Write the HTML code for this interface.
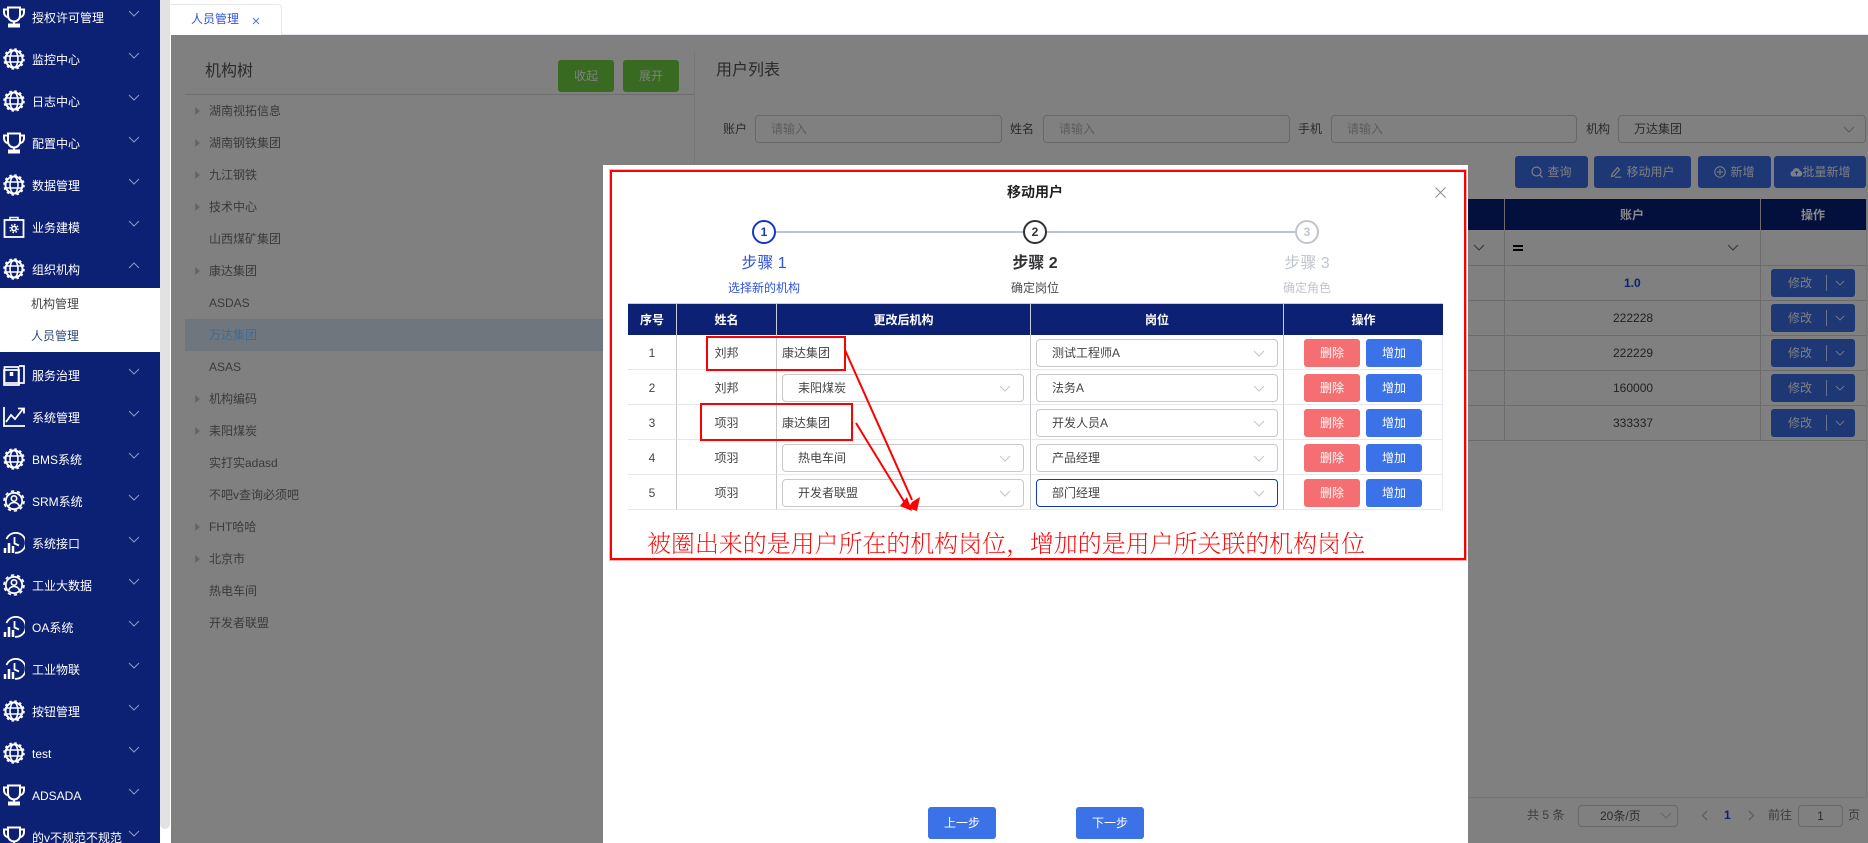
<!DOCTYPE html>
<html lang="zh">
<head>
<meta charset="utf-8">
<title>人员管理</title>
<style>
html,body{margin:0;padding:0;width:1868px;height:843px;overflow:hidden;background:#fff}
body{font-family:"Liberation Sans","Noto Sans CJK SC",sans-serif;font-size:12px;color:#333;position:relative}
.a{position:absolute}
.t{position:absolute;line-height:20px;white-space:nowrap}
.m{color:#fff;left:32px;font-size:12px;margin-top:1px}
.mi{position:absolute;left:3px;width:22px;height:22px;fill:none;stroke:#fff;stroke-width:2}
.ch{position:absolute;left:128px;width:12px;height:7px;fill:none;stroke:#8f9ac4;stroke-width:1;margin-top:-1px}
.tr{left:209px;color:#3a3a3a;font-size:12px;margin-top:1px}
.ar{position:absolute;left:195px;width:0;height:0;border-left:5px solid #666;border-top:4px solid transparent;border-bottom:4px solid transparent;margin-top:1px}
.in{position:absolute;top:115px;height:28px;box-sizing:border-box;border:1px solid #686868;border-radius:4px;line-height:26px;padding-left:15px;color:#5c5c5c}
.lb{top:119px;color:#2b2b2b}
.bb{position:absolute;background:#1e3875;color:#808080;border-radius:3px;text-align:center;box-sizing:border-box}
.bo{position:absolute;left:1771px;width:84px;height:28px;background:#1e3875;border-radius:3px;color:#808080;line-height:28px;padding-left:17px;box-sizing:border-box}
.bo i{position:absolute;left:55px;top:6px;width:1px;height:16px;background:#67738d}
.bo svg{position:absolute;left:64px;top:11px;width:10px;height:6px;fill:none;stroke:#808080;stroke-width:1}
table{border-collapse:separate;border-spacing:0;table-layout:fixed}
th{background:#0c2074;color:#fff;font-weight:700;font-size:12px;height:31px;padding:0;border-right:1px solid #c7ccd8;border-top:1px solid #ccc;box-sizing:border-box}
td{height:35px;padding:1px 0 0;border-bottom:1px solid #e4e7ed;border-right:1px solid #c8c8c8;text-align:center;position:relative;box-sizing:border-box;font-size:12px;color:#444}
.s{position:absolute;left:5px;top:4px;width:242px;height:28px;border:1px solid #c8c8c8;border-radius:4px;box-sizing:border-box;line-height:26px;padding-left:15px;text-align:left;color:#444;background:#fff}
.s svg{position:absolute;right:12px;top:10px;width:12px;height:7px;fill:none;stroke:#c0c4cc;stroke-width:1}
.d,.z{position:absolute;top:4px;width:56px;height:28px;border-radius:3px;color:#fff;line-height:28px}
.d{left:20px;background:#f56f72}
.z{left:82px;background:#3c72e8}
.c{position:absolute;top:220px;width:24px;height:24px;border:2px solid;border-radius:50%;box-sizing:border-box;text-align:center;line-height:20px;font-size:12px;font-weight:700}
.st{position:absolute;text-align:center;white-space:nowrap;width:160px}
</style>
</head>
<body>
<svg width="0" height="0" style="position:absolute">
<defs>
<symbol id="trophy" viewBox="0 0 22 22"><path d="M5 1.500h12v8a6 6 0 0 1-12 0zM5 3.500H1v2.500c0 3 2 5 4.500 5.500M17 3.500h4v2.500c0 3-2 5-4.500 5.500M11 15.500v3M6 20.500h10v-2H6z"/></symbol>
<symbol id="globe" viewBox="0 0 22 22"><circle cx="11" cy="11" r="8.500"/><circle cx="11" cy="11" r="10" stroke-dasharray="2.500 2.740" stroke-width="1.500"/><ellipse cx="11" cy="11" rx="4" ry="8.500" stroke-width="1.600"/><path d="M3 8h16M3 14h16" stroke-width="1.600"/></symbol>
<symbol id="bag" viewBox="0 0 22 22"><rect x="1.500" y="4" width="19" height="17" stroke-width="1.800"/><path d="M7 4V1.500h8V4" stroke-width="1.500"/><circle cx="11" cy="12.500" r="2.200" stroke-width="1.600"/><circle cx="11" cy="12.500" r="4" stroke-dasharray="1.500 1.640" stroke-width="1.400"/></symbol>
<symbol id="book" viewBox="0 0 22 22"><path d="M16 2h5v17h-5M3 6h13v15H1V6z" stroke-width="1.700"/><rect x="1.500" y="3" width="14" height="16" stroke-width="1.700"/><path d="M8.500 8v4" stroke-width="3.500"/></symbol>
<symbol id="chart" viewBox="0 0 22 22"><path d="M1 1v19h21M3 16l5-7 4 4 8-10M15 2.500h6v5" stroke-width="1.800"/></symbol>
<symbol id="gear" viewBox="0 0 22 22"><circle cx="11" cy="11" r="8.200" stroke-width="1.800"/><circle cx="11" cy="11" r="10" stroke-dasharray="3.300 2.940" stroke-width="1.600"/><circle cx="11" cy="8.500" r="2.700" stroke-width="1.600"/><path d="M5.500 16.500c1-3 3-4 5.500-4s4.500 1 5.500 4" stroke-width="1.600"/></symbol>
<symbol id="clock" viewBox="0 0 22 22"><path d="M3.500 7A10 10 0 1 1 12 20.800M11.500 5v6.500l4.500 2" stroke-width="1.800"/><path d="M2 21v-5M6 21V11M10 21v-7" stroke-width="2.500"/></symbol>
<symbol id="dn" viewBox="0 0 12 7"><path d="M1 1l5 5 5-5"/></symbol>
<symbol id="up" viewBox="0 0 12 7"><path d="M1 6l5-5 5 5"/></symbol>
</defs>
</svg>

<!-- Sidebar -->
<div class="a" style="left:0;top:0;width:160px;height:843px;background:#0c2074"></div>
<div class="a" style="left:160px;top:0;width:10px;height:829px;background:#e2e2e2;border-radius:0 0 5px 5px"></div>
<div class="a" style="left:0;top:288px;width:160px;height:64px;background:#fff"></div>

<svg class="mi" style="top:6px"><use href="#trophy"/></svg><span class="t m" style="top:7px">授权许可管理</span><svg class="ch" style="top:11px"><use href="#dn"/></svg>
<svg class="mi" style="top:48px"><use href="#globe"/></svg><span class="t m" style="top:49px">监控中心</span><svg class="ch" style="top:53px"><use href="#dn"/></svg>
<svg class="mi" style="top:90px"><use href="#globe"/></svg><span class="t m" style="top:91px">日志中心</span><svg class="ch" style="top:95px"><use href="#dn"/></svg>
<svg class="mi" style="top:132px"><use href="#trophy"/></svg><span class="t m" style="top:133px">配置中心</span><svg class="ch" style="top:137px"><use href="#dn"/></svg>
<svg class="mi" style="top:174px"><use href="#globe"/></svg><span class="t m" style="top:175px">数据管理</span><svg class="ch" style="top:179px"><use href="#dn"/></svg>
<svg class="mi" style="top:216px"><use href="#bag"/></svg><span class="t m" style="top:217px">业务建模</span><svg class="ch" style="top:221px"><use href="#dn"/></svg>
<svg class="mi" style="top:258px"><use href="#globe"/></svg><span class="t m" style="top:259px">组织机构</span><svg class="ch" style="top:263px"><use href="#up"/></svg>
<span class="t" style="left:31px;top:294px;color:#444">机构管理</span>
<span class="t" style="left:31px;top:326px;color:#2c4a78">人员管理</span>
<svg class="mi" style="top:364px"><use href="#book"/></svg><span class="t m" style="top:365px">服务治理</span><svg class="ch" style="top:369px"><use href="#dn"/></svg>
<svg class="mi" style="top:406px"><use href="#chart"/></svg><span class="t m" style="top:407px">系统管理</span><svg class="ch" style="top:411px"><use href="#dn"/></svg>
<svg class="mi" style="top:448px"><use href="#globe"/></svg><span class="t m" style="top:449px">BMS系统</span><svg class="ch" style="top:453px"><use href="#dn"/></svg>
<svg class="mi" style="top:490px"><use href="#gear"/></svg><span class="t m" style="top:491px">SRM系统</span><svg class="ch" style="top:495px"><use href="#dn"/></svg>
<svg class="mi" style="top:532px"><use href="#clock"/></svg><span class="t m" style="top:533px">系统接口</span><svg class="ch" style="top:537px"><use href="#dn"/></svg>
<svg class="mi" style="top:574px"><use href="#gear"/></svg><span class="t m" style="top:575px">工业大数据</span><svg class="ch" style="top:579px"><use href="#dn"/></svg>
<svg class="mi" style="top:616px"><use href="#clock"/></svg><span class="t m" style="top:617px">OA系统</span><svg class="ch" style="top:621px"><use href="#dn"/></svg>
<svg class="mi" style="top:658px"><use href="#clock"/></svg><span class="t m" style="top:659px">工业物联</span><svg class="ch" style="top:663px"><use href="#dn"/></svg>
<svg class="mi" style="top:700px"><use href="#globe"/></svg><span class="t m" style="top:701px">按钮管理</span><svg class="ch" style="top:705px"><use href="#dn"/></svg>
<svg class="mi" style="top:742px"><use href="#globe"/></svg><span class="t m" style="top:743px">test</span><svg class="ch" style="top:747px"><use href="#dn"/></svg>
<svg class="mi" style="top:784px"><use href="#trophy"/></svg><span class="t m" style="top:785px">ADSADA</span><svg class="ch" style="top:789px"><use href="#dn"/></svg>
<svg class="mi" style="top:826px"><use href="#trophy"/></svg><span class="t m" style="top:827px">的v不规范不规范</span><svg class="ch" style="top:831px"><use href="#dn"/></svg>

<!-- Tab bar -->
<div class="a" style="left:171px;top:34px;width:1697px;height:1px;background:#e4e7ed"></div>
<div class="a" style="left:171px;top:4px;width:111px;height:31px;box-sizing:border-box;border:1px solid #e4e7ed;border-bottom:0;border-left:0;border-radius:0 4px 0 0;background:#fff"></div>
<span class="t" style="left:191px;top:9px;color:#2f54d8">人员管理</span>
<svg class="a" style="left:252px;top:17px" width="8" height="8" viewBox="0 0 8 8"><path d="M1 1l6 6M7 1l-6 6" stroke="#5a78d8" stroke-width="1"/></svg>

<!-- Dimmed main area -->
<div class="a" style="left:171px;top:35px;width:1697px;height:808px;background:#808080"></div>
<div class="a" style="left:694px;top:50px;width:1px;height:793px;background:#787878"></div>
<div class="a" style="left:185px;top:94px;width:509px;height:1px;background:#6e6e6e"></div>
<span class="t" style="left:205px;top:62px;font-size:16px;color:#2a2a2a">机构树</span>
<div class="bb" style="left:558px;top:60px;width:56px;height:32px;background:#396a21;line-height:32px">收起</div>
<div class="bb" style="left:623px;top:60px;width:56px;height:32px;background:#396a21;line-height:32px">展开</div>

<div class="a" style="left:185px;top:319px;width:509px;height:32px;background:#6f767d"></div>
<i class="ar" style="top:106px"></i><span class="t tr" style="top:100px">湖南视拓信息</span>
<i class="ar" style="top:138px"></i><span class="t tr" style="top:132px">湖南钢铁集团</span>
<i class="ar" style="top:170px"></i><span class="t tr" style="top:164px">九江钢铁</span>
<i class="ar" style="top:202px"></i><span class="t tr" style="top:196px">技术中心</span>
<span class="t tr" style="top:228px">山西煤矿集团</span>
<i class="ar" style="top:266px"></i><span class="t tr" style="top:260px">康达集团</span>
<span class="t tr" style="top:292px">ASDAS</span>
<span class="t tr" style="top:324px;color:#3f6c94">万达集团</span>
<span class="t tr" style="top:356px">ASAS</span>
<i class="ar" style="top:394px"></i><span class="t tr" style="top:388px">机构编码</span>
<i class="ar" style="top:426px"></i><span class="t tr" style="top:420px">耒阳煤炭</span>
<span class="t tr" style="top:452px">实打实adasd</span>
<span class="t tr" style="top:484px">不吧v查询必须吧</span>
<i class="ar" style="top:522px"></i><span class="t tr" style="top:516px">FHT哈哈</span>
<i class="ar" style="top:554px"></i><span class="t tr" style="top:548px">北京市</span>
<span class="t tr" style="top:580px">热电车间</span>
<span class="t tr" style="top:612px">开发者联盟</span>

<span class="t" style="left:716px;top:61px;font-size:16px;color:#2a2a2a">用户列表</span>
<span class="t lb" style="left:723px">账户</span><div class="in" style="left:755px;width:247px">请输入</div>
<span class="t lb" style="left:1010px">姓名</span><div class="in" style="left:1043px;width:247px">请输入</div>
<span class="t lb" style="left:1298px">手机</span><div class="in" style="left:1331px;width:246px">请输入</div>
<span class="t lb" style="left:1586px">机构</span><div class="in" style="left:1618px;width:248px;color:#2b2b2b">万达集团</div>
<svg class="a" style="left:1843px;top:126px;fill:none;stroke:#5a5a5a;stroke-width:1" width="12" height="7"><use href="#dn"/></svg>

<div class="bb" style="left:1515px;top:156px;width:73px;height:32px;line-height:32px;padding-left:16px">查询</div>
<svg class="a" style="left:1531px;top:166px;fill:none;stroke:#808080;stroke-width:1.200" width="12" height="12" viewBox="0 0 12 12"><circle cx="5.500" cy="5.500" r="4.500"/><path d="M9 9l2.500 2.500"/></svg>
<div class="bb" style="left:1594px;top:156px;width:97px;height:32px;line-height:32px;padding-left:16px">移动用户</div>
<svg class="a" style="left:1610px;top:166px;fill:none;stroke:#808080;stroke-width:1.200" width="12" height="12" viewBox="0 0 12 12"><path d="M2 8l5.500-6.500 2 2L4 10l-2.500.5zM5 11.200h6.500"/></svg>
<div class="bb" style="left:1698px;top:156px;width:73px;height:32px;line-height:32px;padding-left:16px">新增</div>
<svg class="a" style="left:1714px;top:166px;fill:none;stroke:#808080;stroke-width:1" width="12" height="12" viewBox="0 0 12 12"><circle cx="6" cy="6" r="5.200"/><path d="M6 3v6M3 6h6"/></svg>
<div class="bb" style="left:1774px;top:156px;width:92px;height:32px;line-height:32px;padding-left:13px">批量新增</div>
<svg class="a" style="left:1790px;top:167px" width="13" height="10" viewBox="0 0 13 10"><path d="M3 9.500a2.800 2.800 0 0 1-.3-5.500 3.800 3.800 0 0 1 7.300-.3A3 3 0 0 1 10 9.500z" fill="#808080"/><path d="M6.500 8V4.500M5 6l1.500-1.500L8 6" fill="none" stroke="#1e3875"/></svg>

<div class="a" style="left:1468px;top:199px;width:398px;height:31px;background:#03103d"></div>
<div class="a" style="left:1504px;top:199px;width:1px;height:241px;background:#6c6c6c"></div>
<div class="a" style="left:1760px;top:199px;width:1px;height:241px;background:#6c6c6c"></div>
<div class="a" style="left:1866px;top:199px;width:1px;height:598px;background:#747474"></div>
<span class="t" style="left:1620px;top:205px;color:#8a8a8a;font-weight:700">账户</span>
<span class="t" style="left:1801px;top:205px;color:#8a8a8a;font-weight:700">操作</span>
<div class="a" style="left:1468px;top:265px;width:398px;height:1px;background:#6c6c6c"></div>
<div class="a" style="left:1468px;top:300px;width:398px;height:1px;background:#6c6c6c"></div>
<div class="a" style="left:1468px;top:335px;width:398px;height:1px;background:#6c6c6c"></div>
<div class="a" style="left:1468px;top:370px;width:398px;height:1px;background:#6c6c6c"></div>
<div class="a" style="left:1468px;top:405px;width:398px;height:1px;background:#6c6c6c"></div>
<div class="a" style="left:1468px;top:440px;width:398px;height:1px;background:#6c6c6c"></div>
<svg class="a" style="left:1473px;top:244px;fill:none;stroke:#333;stroke-width:1" width="12" height="7"><use href="#dn"/></svg>
<svg class="a" style="left:1727px;top:244px;fill:none;stroke:#333;stroke-width:1" width="12" height="7"><use href="#dn"/></svg>
<div class="a" style="left:1513px;top:245px;width:10px;height:2px;background:#000"></div>
<div class="a" style="left:1513px;top:249px;width:10px;height:2px;background:#000"></div>
<span class="t" style="left:1624px;top:273px;color:#0c2074;font-weight:700">1.0</span>
<span class="t" style="left:1613px;top:308px;color:#222">222228</span>
<span class="t" style="left:1613px;top:343px;color:#222">222229</span>
<span class="t" style="left:1613px;top:378px;color:#222">160000</span>
<span class="t" style="left:1613px;top:413px;color:#222">333337</span>
<div class="bo" style="top:269px">修改<i></i><svg><use href="#dn"/></svg></div>
<div class="bo" style="top:304px">修改<i></i><svg><use href="#dn"/></svg></div>
<div class="bo" style="top:339px">修改<i></i><svg><use href="#dn"/></svg></div>
<div class="bo" style="top:374px">修改<i></i><svg><use href="#dn"/></svg></div>
<div class="bo" style="top:409px">修改<i></i><svg><use href="#dn"/></svg></div>

<div class="a" style="left:1468px;top:797px;width:398px;height:1px;background:#747474"></div>
<span class="t" style="left:1527px;top:805px;color:#3c3c3c">共 5 条</span>
<div class="in" style="left:1578px;top:805px;width:100px;height:22px;line-height:20px;padding-left:21px;color:#2b2b2b">20条/页</div>
<svg class="a" style="left:1660px;top:812px;fill:none;stroke:#666;stroke-width:1" width="12" height="7"><use href="#dn"/></svg>
<svg class="a" style="left:1701px;top:810px;fill:none;stroke:#5e5e5e;stroke-width:1.300" width="7" height="11"><path d="M6 1L1.500 5.500 6 10"/></svg>
<span class="t" style="left:1724px;top:805px;color:#0c2074;font-weight:700">1</span>
<svg class="a" style="left:1748px;top:810px;fill:none;stroke:#5e5e5e;stroke-width:1.300" width="7" height="11"><path d="M1 1l4.500 4.500L1 10"/></svg>
<span class="t" style="left:1768px;top:805px;color:#3c3c3c">前往</span>
<div class="in" style="left:1798px;top:805px;width:45px;height:22px;line-height:20px;padding-left:0;text-align:center;color:#2b2b2b">1</div>
<span class="t" style="left:1848px;top:805px;color:#3c3c3c">页</span>

<!-- Dialog -->
<div class="a" style="left:603px;top:165px;width:865px;height:678px;background:#fff"></div>
<span class="t" style="left:1007px;top:182px;font-size:14px;font-weight:700;color:#222">移动用户</span>
<svg class="a" style="left:1435px;top:187px" width="11" height="11" viewBox="0 0 11 11"><path d="M.5.500l10 10M10.500.5l-10 10" stroke="#8c8c8c" stroke-width="1"/></svg>

<div class="a" style="left:776px;top:231px;width:247px;height:2px;background:#bdc3cf"></div>
<div class="a" style="left:1047px;top:231px;width:248px;height:2px;background:#bdc3cf"></div>
<div class="c" style="left:752px;border-color:#1537c4;color:#1537c4">1</div>
<div class="c" style="left:1023px;border-color:#303133;color:#303133">2</div>
<div class="c" style="left:1295px;border-color:#c0c4cc;color:#c0c4cc">3</div>
<span class="st" style="left:684px;top:253px;font-size:16px;line-height:22px;color:#2f54d8">步骤 1</span>
<span class="st" style="left:955px;top:253px;font-size:16px;line-height:22px;color:#303133;font-weight:700">步骤 2</span>
<span class="st" style="left:1227px;top:253px;font-size:16px;line-height:22px;color:#c0c4cc">步骤 3</span>
<span class="st" style="left:684px;top:278px;font-size:12px;line-height:20px;color:#2f54d8">选择新的机构</span>
<span class="st" style="left:955px;top:278px;font-size:12px;line-height:20px;color:#4c4c4c">确定岗位</span>
<span class="st" style="left:1227px;top:278px;font-size:12px;line-height:20px;color:#c0c4cc">确定角色</span>

<table class="a" style="left:628px;top:303px;width:815px">
<colgroup><col style="width:49px"><col style="width:100px"><col style="width:254px"><col style="width:253px"><col style="width:159px"></colgroup>
<tr style="height:32px"><th style="height:32px">序号</th><th style="height:32px">姓名</th><th style="height:32px">更改后机构</th><th style="height:32px">岗位</th><th style="height:32px;border-right:0">操作</th></tr>
<tr><td>1</td><td>刘邦</td><td style="text-align:left;padding-left:5px">康达集团</td><td><div class="s">测试工程师A<svg><use href="#dn"/></svg></div></td><td style="border-right-color:#e4e7ed"><div class="d">删除</div><div class="z">增加</div></td></tr>
<tr><td>2</td><td>刘邦</td><td><div class="s">耒阳煤炭<svg><use href="#dn"/></svg></div></td><td><div class="s">法务A<svg><use href="#dn"/></svg></div></td><td style="border-right-color:#e4e7ed"><div class="d">删除</div><div class="z">增加</div></td></tr>
<tr><td>3</td><td>项羽</td><td style="text-align:left;padding-left:5px">康达集团</td><td><div class="s">开发人员A<svg><use href="#dn"/></svg></div></td><td style="border-right-color:#e4e7ed"><div class="d">删除</div><div class="z">增加</div></td></tr>
<tr><td>4</td><td>项羽</td><td><div class="s">热电车间<svg><use href="#dn"/></svg></div></td><td><div class="s">产品经理<svg><use href="#dn"/></svg></div></td><td style="border-right-color:#e4e7ed"><div class="d">删除</div><div class="z">增加</div></td></tr>
<tr><td>5</td><td>项羽</td><td><div class="s">开发者联盟<svg><use href="#dn"/></svg></div></td><td><div class="s" style="border-color:#1537c4">部门经理<svg><use href="#dn"/></svg></div></td><td style="border-right-color:#e4e7ed"><div class="d">删除</div><div class="z">增加</div></td></tr>
</table>

<div class="a" style="left:928px;top:807px;width:68px;height:32px;background:#3c72e8;border-radius:3px;color:#fff;text-align:center;line-height:32px">上一步</div>
<div class="a" style="left:1076px;top:807px;width:68px;height:32px;background:#3c72e8;border-radius:3px;color:#fff;text-align:center;line-height:32px">下一步</div>

<!-- Red annotations -->
<div class="a" style="left:610px;top:170px;width:856px;height:390px;box-sizing:border-box;border:2px solid #f00;box-shadow:0 0 0 1px rgba(255,110,110,.55)"></div>
<div class="a" style="left:706px;top:336px;width:140px;height:35px;box-sizing:border-box;border:2px solid #f00"></div>
<div class="a" style="left:700px;top:403px;width:153px;height:38px;box-sizing:border-box;border:2px solid #f00"></div>
<svg class="a" style="left:0;top:0" width="1868" height="843">
<path d="M845 350L912 500M856 423L905 503" stroke="#f00" stroke-width="2" fill="none"/>
<path d="M907 497L900 506L912 511z" fill="#f00"/>
<path d="M912 502L920 497L917 511L908 508z" fill="#f00"/>
</svg>
<span class="t" style="left:647px;top:531px;line-height:28px;font-size:24px;letter-spacing:-.07px;color:#f00;font-family:'Liberation Serif','Noto Serif CJK SC',serif;font-weight:200">被圈出来的是用户所在的机构岗位，增加的是用户所关联的机构岗位</span>
</body>
</html>
